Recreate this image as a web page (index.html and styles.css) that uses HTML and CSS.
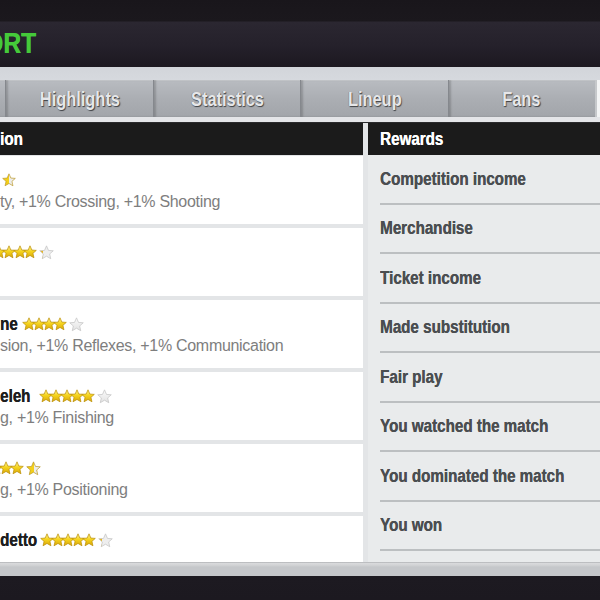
FILE: index.html
```html
<!DOCTYPE html>
<html lang="en">
<head>
<meta charset="utf-8">
<title>Match Report</title>
<link rel="stylesheet" href="styles.css">
</head>
<body>
<svg class="defs" aria-hidden="true">
  <defs>
    <linearGradient id="gGold" x1="0" y1="0" x2="0" y2="1">
      <stop offset="0" stop-color="#fff6a8"/>
      <stop offset=".45" stop-color="#f6d51e"/>
      <stop offset="1" stop-color="#d8a60a"/>
    </linearGradient>
    <linearGradient id="gGrey" x1="0" y1="0" x2="0" y2="1">
      <stop offset="0" stop-color="#fafafa"/>
      <stop offset="1" stop-color="#e2e2e2"/>
    </linearGradient>
    <linearGradient id="gHalf" x1="0" y1="0" x2="1" y2="0">
      <stop offset=".5" stop-color="#f3cf1a"/>
      <stop offset=".5" stop-color="#ececec"/>
    </linearGradient>
    <linearGradient id="gBit" x1="0" y1="0" x2="1" y2="0">
      <stop offset=".25" stop-color="#e9b51a"/>
      <stop offset=".25" stop-color="#eeeeee"/>
    </linearGradient>
    <polygon id="star" points="7,0.8 8.85,5.05 13.3,5.4 9.95,8.35 10.95,12.8 7,10.45 3.05,12.8 4.05,8.35 0.7,5.4 5.15,5.05"/>
  </defs>
</svg>

<header class="top">
  <h1 class="title"><span class="cx">ORT</span></h1>
</header>

<nav class="tabbar">
  <div class="tab tab-first"></div>
  <div class="tab"><span class="cx cc">Highlights</span></div>
  <div class="tab"><span class="cx cc">Statistics</span></div>
  <div class="tab"><span class="cx cc">Lineup</span></div>
  <div class="tab"><span class="cx cc">Fans</span></div>
  <div class="tab tab-active"></div>
</nav>

<main class="panels">
  <section class="col-left">
    <div class="col-head"><span class="cx">ion</span></div>
    <div class="rows">
      <div class="row">
        <div class="name r1">
          <svg class="st half" viewBox="0 0 14 14" fill="url(#gHalf)" stroke="#bb9a2a" stroke-width=".7"><use href="#star"/></svg>
        </div>
        <div class="sub">ty, +1% Crossing, +1% Shooting</div>
      </div>
      <div class="row">
        <div class="name r2">
          <span class="stars">
            <svg class="st" viewBox="0 0 14 14" fill="url(#gGold)" stroke="#b98c00" stroke-width=".7"><use href="#star"/></svg>
            <svg class="st" viewBox="0 0 14 14" fill="url(#gGold)" stroke="#b98c00" stroke-width=".7"><use href="#star"/></svg>
            <svg class="st" viewBox="0 0 14 14" fill="url(#gGold)" stroke="#b98c00" stroke-width=".7"><use href="#star"/></svg>
            <svg class="st" viewBox="0 0 14 14" fill="url(#gGold)" stroke="#b98c00" stroke-width=".7"><use href="#star"/></svg>
          </span>
          <svg class="st last" viewBox="0 0 14 14" fill="url(#gBit)" stroke="#c4c4c4" stroke-width=".7"><use href="#star"/></svg>
        </div>
      </div>
      <div class="row">
        <div class="name">
          <span class="cx nm n3">ne</span>
          <span class="stars">
            <svg class="st" viewBox="0 0 14 14" fill="url(#gGold)" stroke="#b98c00" stroke-width=".7"><use href="#star"/></svg>
            <svg class="st" viewBox="0 0 14 14" fill="url(#gGold)" stroke="#b98c00" stroke-width=".7"><use href="#star"/></svg>
            <svg class="st" viewBox="0 0 14 14" fill="url(#gGold)" stroke="#b98c00" stroke-width=".7"><use href="#star"/></svg>
            <svg class="st" viewBox="0 0 14 14" fill="url(#gGold)" stroke="#b98c00" stroke-width=".7"><use href="#star"/></svg>
          </span>
          <svg class="st last" viewBox="0 0 14 14" fill="url(#gGrey)" stroke="#c4c4c4" stroke-width=".7"><use href="#star"/></svg>
        </div>
        <div class="sub">sion, +1% Reflexes, +1% Communication</div>
      </div>
      <div class="row">
        <div class="name">
          <span class="cx nm n4">eleh</span>
          <span class="stars">
            <svg class="st" viewBox="0 0 14 14" fill="url(#gGold)" stroke="#b98c00" stroke-width=".7"><use href="#star"/></svg>
            <svg class="st" viewBox="0 0 14 14" fill="url(#gGold)" stroke="#b98c00" stroke-width=".7"><use href="#star"/></svg>
            <svg class="st" viewBox="0 0 14 14" fill="url(#gGold)" stroke="#b98c00" stroke-width=".7"><use href="#star"/></svg>
            <svg class="st" viewBox="0 0 14 14" fill="url(#gGold)" stroke="#b98c00" stroke-width=".7"><use href="#star"/></svg>
            <svg class="st" viewBox="0 0 14 14" fill="url(#gGold)" stroke="#b98c00" stroke-width=".7"><use href="#star"/></svg>
          </span>
          <svg class="st last" viewBox="0 0 14 14" fill="url(#gGrey)" stroke="#c4c4c4" stroke-width=".7"><use href="#star"/></svg>
        </div>
        <div class="sub">g, +1% Finishing</div>
      </div>
      <div class="row">
        <div class="name r5">
          <span class="stars">
            <svg class="st" viewBox="0 0 14 14" fill="url(#gGold)" stroke="#b98c00" stroke-width=".7"><use href="#star"/></svg>
            <svg class="st" viewBox="0 0 14 14" fill="url(#gGold)" stroke="#b98c00" stroke-width=".7"><use href="#star"/></svg>
            <svg class="st" viewBox="0 0 14 14" fill="url(#gGold)" stroke="#b98c00" stroke-width=".7"><use href="#star"/></svg>
          </span>
          <svg class="st last" viewBox="0 0 14 14" fill="url(#gHalf)" stroke="#bb9a2a" stroke-width=".7"><use href="#star"/></svg>
        </div>
        <div class="sub">g, +1% Positioning</div>
      </div>
      <div class="row">
        <div class="name">
          <span class="cx nm n6">detto</span>
          <span class="stars">
            <svg class="st" viewBox="0 0 14 14" fill="url(#gGold)" stroke="#b98c00" stroke-width=".7"><use href="#star"/></svg>
            <svg class="st" viewBox="0 0 14 14" fill="url(#gGold)" stroke="#b98c00" stroke-width=".7"><use href="#star"/></svg>
            <svg class="st" viewBox="0 0 14 14" fill="url(#gGold)" stroke="#b98c00" stroke-width=".7"><use href="#star"/></svg>
            <svg class="st" viewBox="0 0 14 14" fill="url(#gGold)" stroke="#b98c00" stroke-width=".7"><use href="#star"/></svg>
            <svg class="st" viewBox="0 0 14 14" fill="url(#gGold)" stroke="#b98c00" stroke-width=".7"><use href="#star"/></svg>
          </span>
          <svg class="st last" viewBox="0 0 14 14" fill="url(#gBit)" stroke="#c4c4c4" stroke-width=".7"><use href="#star"/></svg>
        </div>
      </div>
    </div>
  </section>

  <section class="col-right">
    <div class="col-head rh"><span class="cx">Rewards</span></div>
    <ul class="rewards">
      <li><span class="cx">Competition income</span></li>
      <li><span class="cx">Merchandise</span></li>
      <li><span class="cx">Ticket income</span></li>
      <li><span class="cx">Made substitution</span></li>
      <li><span class="cx">Fair play</span></li>
      <li><span class="cx">You watched the match</span></li>
      <li><span class="cx">You dominated the match</span></li>
      <li><span class="cx">You won</span></li>
    </ul>
  </section>
</main>

<footer class="bottom"></footer>
</body>
</html>
```

FILE: styles.css
```css
* { box-sizing: border-box; }

html, body {
  margin: 0;
  padding: 0;
}

body {
  width: 600px;
  height: 600px;
  overflow: hidden;
  background: #1c1920;
  font-family: "Liberation Sans", Arial, sans-serif;
}

.defs {
  display: block;
  width: 0;
  height: 0;
  overflow: hidden;
}

/* condensed look: Arial Narrow proportions */
.cx {
  display: inline-block;
  transform: scaleX(0.82);
  transform-origin: 0 50%;
}

.cx.cc {
  transform-origin: 50% 50%;
}

/* ---------- top ---------- */
.top {
  height: 67px;
  padding-top: 28px;
  background: linear-gradient(#19161b 0, #1b181d 21px, #2b2731 22px, #25212b 45px, #1c1820 67px);
  overflow: hidden;
}

.title {
  margin: 0 0 0 -16px;
  font-size: 30px;
  line-height: 30px;
  font-weight: bold;
  color: #45c93a;
  white-space: nowrap;
  text-shadow: 0.4px 0 0 #45c93a;
}

/* ---------- tabs ---------- */
.tabbar {
  display: flex;
  height: 55px;
  padding: 13px 0 5px;
  background: linear-gradient(#d2d5da 0, #d6d9de 13px, #d6d9de 50px, #e4e5e8 50px);
}

.tab {
  flex: 0 0 147.4px;
  height: 37px;
  border-left: 1px solid #85888d;
  background: linear-gradient(#b9bcc1, #abaeb3 50%, #a2a5aa);
  box-shadow: inset 2px 0 2px rgba(0, 0, 0, 0.18), inset 0 1px 0 rgba(255, 255, 255, 0.25);
  text-align: center;
  line-height: 38px;
  font-size: 20px;
  font-weight: bold;
  color: #e6e7e9;
  text-shadow: 1px 1px 1px #3f4246, -0.5px -0.5px 0 #7c7f83;
  white-space: nowrap;
}

.tab-first {
  margin-left: -142px;
}

.tab-active {
  flex: 1 1 auto;
  background: #f3f4f5;
  border-left: 2px solid #c6c8cb;
  box-shadow: none;
}

/* ---------- panels ---------- */
.panels {
  display: flex;
  height: 440px;
  background: #e3e5e7;
  border-top: 1px solid #2a2a2c;
}

.col-left {
  flex: 0 0 363px;
  display: flex;
  flex-direction: column;
  overflow: hidden;
}

.col-right {
  flex: 1 1 auto;
  margin-left: 5px;
  background: #e9ebec;
  overflow: hidden;
}

.col-head {
  height: 32px;
  line-height: 32px;
  background: #1b1b1b;
  color: #ffffff;
  font-weight: bold;
  font-size: 18.5px;
  white-space: nowrap;
  text-shadow: 0.3px 0 0 #ffffff;
}

.rh {
  padding-left: 12px;
}

.rows {
  display: flex;
  flex-direction: column;
  gap: 4px;
  padding-top: 1px;
}

.row {
  flex: 0 0 68px;
  height: 68px;
  background: #ffffff;
  padding-top: 13px;
  white-space: nowrap;
}

.name {
  display: flex;
  align-items: center;
  height: 22px;
  font-size: 18.5px;
  font-weight: bold;
  color: #1e1e1e;
  text-shadow: 0.3px 0 0 #1e1e1e;
}

.nm { margin-right: 5px; }
.n3 { margin-right: 0; }
.n4 { margin-right: 2px; }
.n6 { margin-right: -5px; }

.r1 { padding-left: 2px; }
.r2 { margin-left: -8px; }
.r5 { margin-left: -11px; }

.stars {
  display: flex;
}

.st {
  display: block;
  width: 14px;
  height: 14px;
  flex: 0 0 14px;
}

.stars .st {
  margin-right: -3.6px;
}

.stars .st:last-child {
  margin-right: 0;
}

.st.last {
  width: 15px;
  height: 15px;
  flex-basis: 15px;
  margin-left: 2px;
}

.sub {
  height: 22px;
  line-height: 22px;
  font-size: 16px;
  letter-spacing: -0.3px;
  color: #7e7e7e;
}

/* ---------- rewards ---------- */
.rewards {
  list-style: none;
  margin: 0;
  padding: 0;
}

.rewards li {
  display: flex;
  align-items: center;
  height: 49.5px;
  margin-left: 12px;
  border-bottom: 2px solid #bcbfc1;
  font-size: 18.5px;
  font-weight: bold;
  color: #4b4e51;
  white-space: nowrap;
  text-shadow: 0.3px 0 0 #4b4e51;
}

/* ---------- bottom ---------- */
.bottom {
  height: 38px;
  background: linear-gradient(#9fa1a4 0, #dadbdd 1px, #d3d4d6 3px, #c5c7ca 5px, #c5c7ca 14px, #1d1a21 14px, #1c1920 100%);
}
```
